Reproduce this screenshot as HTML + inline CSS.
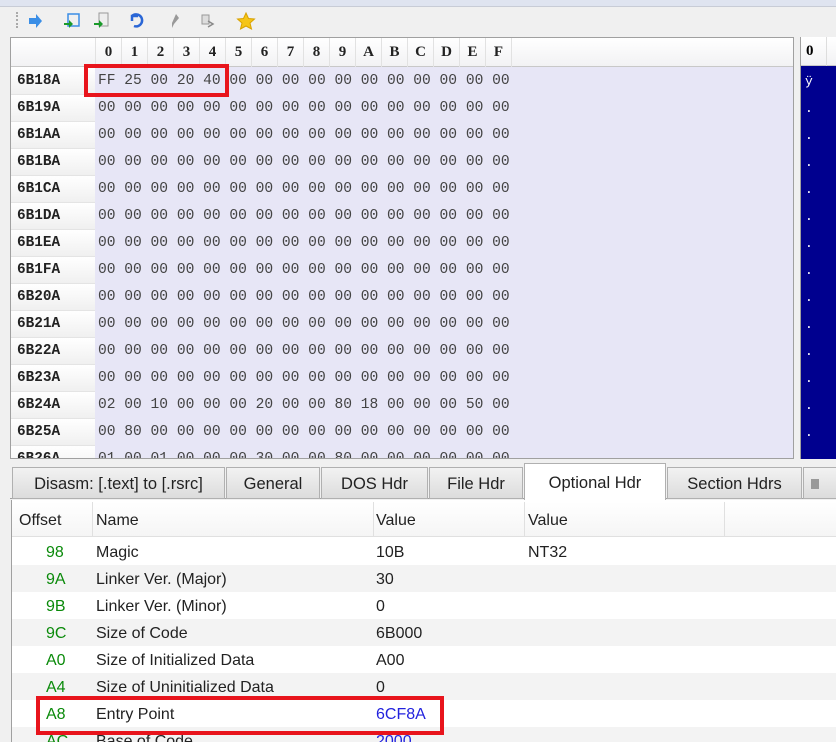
<!DOCTYPE html>
<html><head><style>
*{margin:0;padding:0;box-sizing:border-box}
body{width:836px;height:742px;overflow:hidden;background:#f0f0f0;font-family:"Liberation Sans",sans-serif;position:relative}
.abs{position:absolute}
.mono{font-family:"Liberation Mono",monospace;font-size:14.4px;white-space:pre}
.off{position:absolute;left:0;width:84px;height:27px;line-height:27px;background:linear-gradient(#fff,#f0f0f0);border-bottom:1px solid #e4e4e4;font-weight:bold;padding-left:6px;color:#222;font-family:"Liberation Mono",monospace;font-size:14.4px}
.dat{position:absolute;left:87px;height:27px;line-height:27px;color:#444;font-family:"Liberation Mono",monospace;font-size:14.6px;white-space:pre}
.hd{position:absolute;top:0;width:26px;height:29px;line-height:29px;text-align:center;font-family:"Liberation Serif",serif;font-weight:bold;font-size:15px;color:#222;border-right:1px solid #e2e2e2}
.tab{position:absolute;top:467px;height:32px;background:linear-gradient(#f2f2f2,#dcdcdc);border:1px solid #b0b0b0;font-size:16.5px;line-height:32px;text-align:center;color:#222}
.tr{position:absolute;left:12px;width:824px;height:27px;font-size:16px;line-height:27px;color:#222}
.tr span{position:absolute}
.g{color:#0a8a0a}
</style></head><body>
<div class="abs" style="left:0;top:0;width:836px;height:6px;background:#dfe4f0"></div>
<div class="abs" style="left:0;top:6px;width:836px;height:1px;background:#c8ccd6"></div>
<div class="abs" style="left:16px;top:12px;width:2px;height:16px;border-left:2px dotted #aaa"></div>
<svg class="abs" style="left:26px;top:12px" width="240" height="18">
<path d="M3 6h7V2l6 7-6 7v-4H3z" fill="#3a8ee6"/>
<rect x="42" y="2" width="11" height="12" fill="none" stroke="#3a8ee6" stroke-width="1.5"/><path d="M38 11h5v-3l4 4-4 4v-3h-5z" fill="#1a9a2a"/>
<rect x="73" y="1" width="9" height="13" fill="#eee" stroke="#999"/><path d="M68 11h5v-3l4 4-4 4v-3h-5z" fill="#1a9a2a"/>
<path d="M112 4h-6v5M106 4a6 6 0 1 1 2 10" fill="none" stroke="#2a66d6" stroke-width="2.5"/>
<path d="M150 2l3 4-5 6-2 4 0-5z" fill="#999"/>
<rect x="176" y="3" width="7" height="9" fill="#ddd" stroke="#999"/><path d="M182 9l5 3-5 3" fill="none" stroke="#888" stroke-width="1.5"/>
<path d="M220 1l2.5 5.5 6 .5-4.5 4 1.5 6-5.5-3-5.5 3 1.5-6-4.5-4 6-.5z" fill="#f5c518" stroke="#d9a200"/>
</svg>
<div class="abs" style="left:10px;top:37px;width:784px;height:422px;background:#e7e6f6;border:1px solid #a0a0a0;overflow:hidden">
 <div class="abs" style="left:0;top:0;width:784px;height:29px;background:linear-gradient(#fff,#f2f2f4);border-bottom:1px solid #c8c8c8"></div>
 <div class="abs" style="left:0;top:29px;width:84px;height:400px;background:#fff"></div>
 <div class="abs" style="left:84px;top:0;width:1px;height:29px;background:#e2e2e2"></div>
 <div class="hd" style="left:85px">0</div><div class="hd" style="left:111px">1</div><div class="hd" style="left:137px">2</div><div class="hd" style="left:163px">3</div><div class="hd" style="left:189px">4</div><div class="hd" style="left:215px">5</div><div class="hd" style="left:241px">6</div><div class="hd" style="left:267px">7</div><div class="hd" style="left:293px">8</div><div class="hd" style="left:319px">9</div><div class="hd" style="left:345px">A</div><div class="hd" style="left:371px">B</div><div class="hd" style="left:397px">C</div><div class="hd" style="left:423px">D</div><div class="hd" style="left:449px">E</div><div class="hd" style="left:475px">F</div>
 <div style="position:absolute;left:0;top:30px;width:784px">
 <div class="off" style="top:0">6B18A</div><div class="dat" style="top:0">FF 25 00 20 40 00 00 00 00 00 00 00 00 00 00 00</div>
 <div class="off" style="top:27px">6B19A</div><div class="dat" style="top:27px">00 00 00 00 00 00 00 00 00 00 00 00 00 00 00 00</div>
 <div class="off" style="top:54px">6B1AA</div><div class="dat" style="top:54px">00 00 00 00 00 00 00 00 00 00 00 00 00 00 00 00</div>
 <div class="off" style="top:81px">6B1BA</div><div class="dat" style="top:81px">00 00 00 00 00 00 00 00 00 00 00 00 00 00 00 00</div>
 <div class="off" style="top:108px">6B1CA</div><div class="dat" style="top:108px">00 00 00 00 00 00 00 00 00 00 00 00 00 00 00 00</div>
 <div class="off" style="top:135px">6B1DA</div><div class="dat" style="top:135px">00 00 00 00 00 00 00 00 00 00 00 00 00 00 00 00</div>
 <div class="off" style="top:162px">6B1EA</div><div class="dat" style="top:162px">00 00 00 00 00 00 00 00 00 00 00 00 00 00 00 00</div>
 <div class="off" style="top:189px">6B1FA</div><div class="dat" style="top:189px">00 00 00 00 00 00 00 00 00 00 00 00 00 00 00 00</div>
 <div class="off" style="top:216px">6B20A</div><div class="dat" style="top:216px">00 00 00 00 00 00 00 00 00 00 00 00 00 00 00 00</div>
 <div class="off" style="top:243px">6B21A</div><div class="dat" style="top:243px">00 00 00 00 00 00 00 00 00 00 00 00 00 00 00 00</div>
 <div class="off" style="top:270px">6B22A</div><div class="dat" style="top:270px">00 00 00 00 00 00 00 00 00 00 00 00 00 00 00 00</div>
 <div class="off" style="top:297px">6B23A</div><div class="dat" style="top:297px">00 00 00 00 00 00 00 00 00 00 00 00 00 00 00 00</div>
 <div class="off" style="top:324px">6B24A</div><div class="dat" style="top:324px">02 00 10 00 00 00 20 00 00 80 18 00 00 00 50 00</div>
 <div class="off" style="top:351px">6B25A</div><div class="dat" style="top:351px">00 80 00 00 00 00 00 00 00 00 00 00 00 00 00 00</div>
 <div class="off" style="top:378px">6B26A</div><div class="dat" style="top:378px">01 00 01 00 00 00 30 00 00 80 00 00 00 00 00 00</div>
 </div>
</div>
<div class="abs" style="left:800px;top:37px;width:36px;height:422px;border-left:1px solid #a0a0a0;background:#00008f;overflow:hidden">
 <div class="abs" style="left:0;top:0;width:36px;height:29px;background:linear-gradient(#fff,#f2f2f4);border-bottom:1px solid #c8c8c8;font-family:'Liberation Serif',serif;font-weight:bold;font-size:15px;line-height:29px;padding-left:5px">0</div>
 <div class="abs" style="left:25px;top:0;width:1px;height:29px;background:#ddd"></div>
 <div class="abs mono" style="left:4px;top:31px;color:#fff;line-height:27px;font-size:13px">ÿ
.
.
.
.
.
.
.
.
.
.
.
.
.
.</div>
</div>
<div class="abs" style="left:10px;top:498px;width:826px;height:1px;background:#a0a0a0"></div>
<div class="tab" style="left:12px;width:213px">Disasm: [.text] to [.rsrc]</div>
<div class="tab" style="left:226px;width:94px">General</div>
<div class="tab" style="left:321px;width:107px">DOS Hdr</div>
<div class="tab" style="left:429px;width:94px">File Hdr</div>
<div class="tab" style="left:524px;width:142px;top:463px;height:37px;background:#fff;border-bottom:none;line-height:38px">Optional Hdr</div>
<div class="tab" style="left:667px;width:135px">Section Hdrs</div>
<div class="tab" style="left:803px;width:40px"><span style="display:inline-block;width:8px;height:10px;background:#999;margin-left:-16px"></span></div>
<div class="abs" style="left:11px;top:500px;width:825px;height:242px;background:#fff;border-left:1px solid #a0a0a0"></div>
<div class="abs" style="left:12px;top:502px;width:824px;height:35px;background:linear-gradient(#fff,#f5f5f5);border-bottom:1px solid #e0e0e0"></div>
<div class="abs" style="left:92px;top:502px;width:1px;height:35px;background:#e0e0e0"></div>
<div class="abs" style="left:373px;top:502px;width:1px;height:35px;background:#e0e0e0"></div>
<div class="abs" style="left:524px;top:502px;width:1px;height:35px;background:#e0e0e0"></div>
<div class="abs" style="left:724px;top:502px;width:1px;height:35px;background:#e0e0e0"></div>
<div class="tr" style="top:507px"><span style="left:7px">Offset</span><span style="left:84px">Name</span><span style="left:364px">Value</span><span style="left:516px">Value</span></div>
<div class="tr" style="top:539px"><span class="g" style="left:34px">98</span><span style="left:84px">Magic</span><span style="left:364px">10B</span><span style="left:516px">NT32</span></div>
<div class="tr" style="top:565px;background:#f3f3f3;line-height:29px"><span class="g" style="left:34px">9A</span><span style="left:84px">Linker Ver. (Major)</span><span style="left:364px">30</span></div>
<div class="tr" style="top:592px;line-height:29px"><span class="g" style="left:34px">9B</span><span style="left:84px">Linker Ver. (Minor)</span><span style="left:364px">0</span></div>
<div class="tr" style="top:619px;background:#f3f3f3;line-height:29px"><span class="g" style="left:34px">9C</span><span style="left:84px">Size of Code</span><span style="left:364px">6B000</span></div>
<div class="tr" style="top:646px;line-height:29px"><span class="g" style="left:34px">A0</span><span style="left:84px">Size of Initialized Data</span><span style="left:364px">A00</span></div>
<div class="tr" style="top:673px;background:#f3f3f3;line-height:29px"><span class="g" style="left:34px">A4</span><span style="left:84px">Size of Uninitialized Data</span><span style="left:364px">0</span></div>
<div class="tr" style="top:700px;line-height:29px"><span class="g" style="left:34px">A8</span><span style="left:84px">Entry Point</span><span style="left:364px;color:#2222dd">6CF8A</span></div>
<div class="tr" style="top:727px;height:15px;overflow:hidden;background:#f3f3f3;line-height:29px"><span class="g" style="left:34px">AC</span><span style="left:84px">Base of Code</span><span style="left:364px;color:#2222dd">2000</span></div>
<div class="abs" style="left:84px;top:64px;width:145px;height:33px;border:4px solid #e8141c"></div>
<div class="abs" style="left:36px;top:696px;width:408px;height:39px;border:4px solid #e8141c"></div>
</body></html>
